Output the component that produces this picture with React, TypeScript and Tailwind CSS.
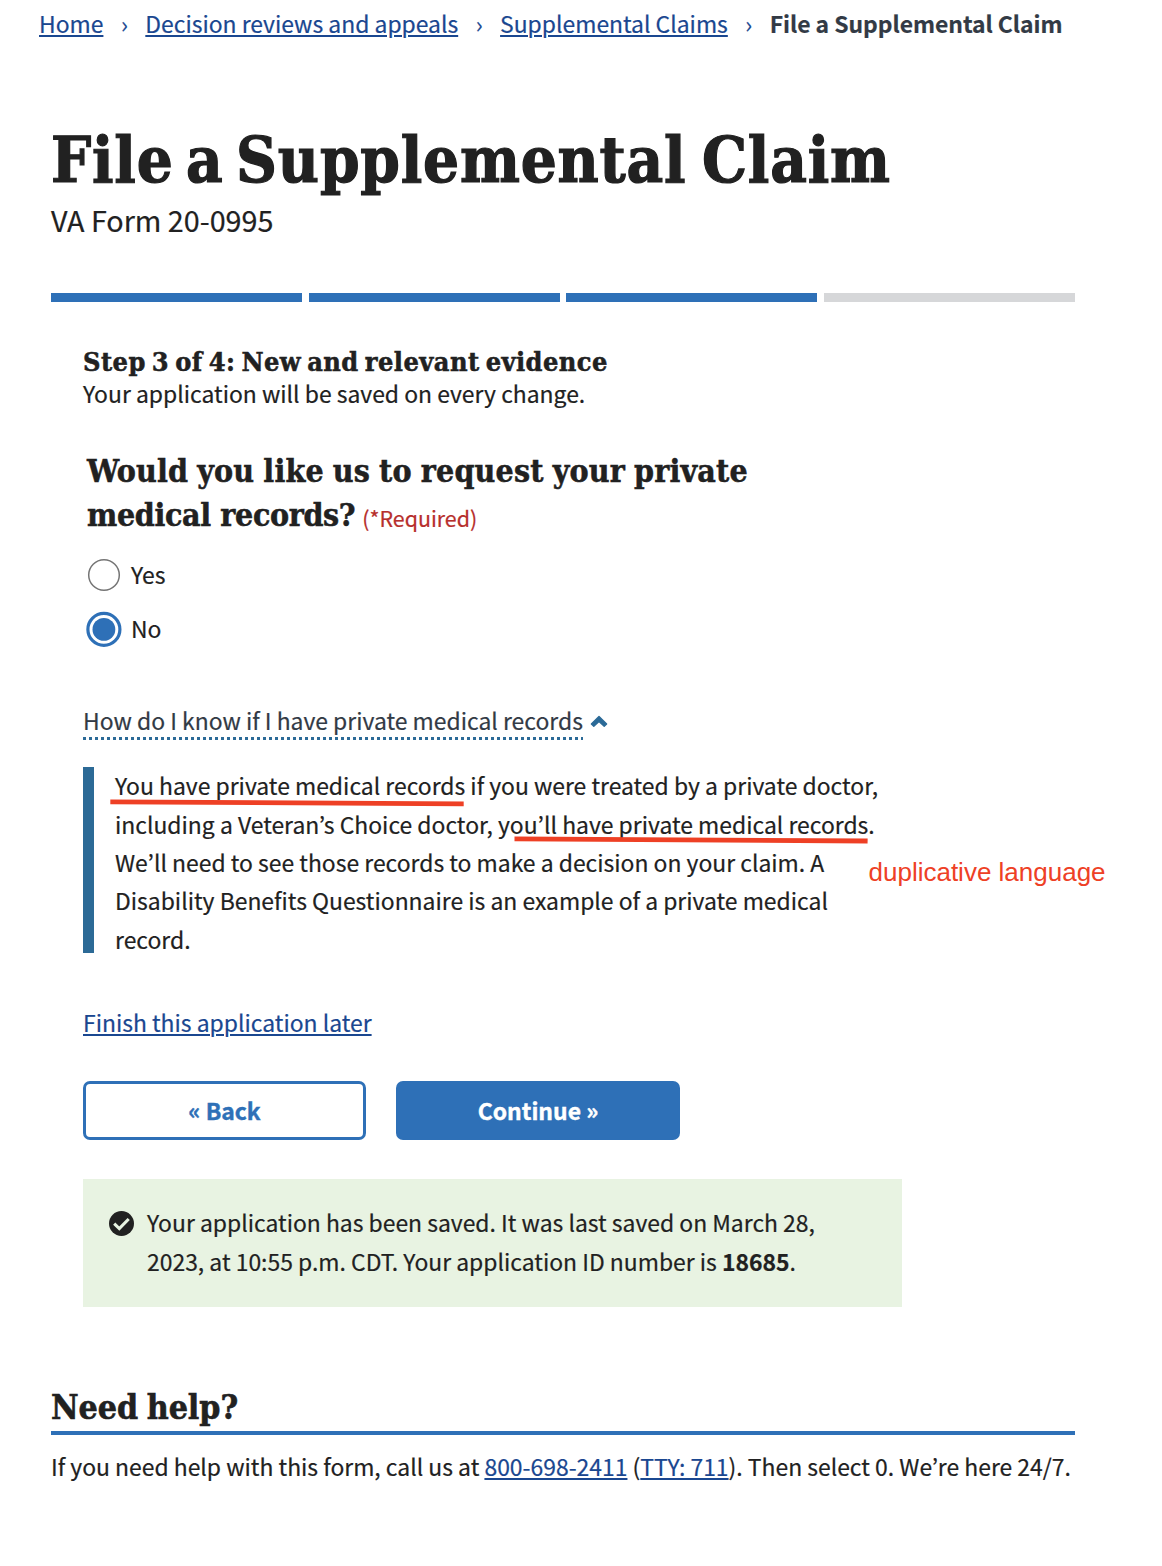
import type { ReactNode } from "react";

const LINK = "text-[#1a4790] underline decoration-2 underline-offset-[2px]";
const HEADING = "font-['DejaVu_Serif_Condensed','DejaVu_Serif',serif] font-bold";

function Link({ children }: { children: ReactNode }) {
  return (
    <a href="#" className={LINK}>
      {children}
    </a>
  );
}

function Breadcrumbs() {
  const trail = ["Home", "Decision reviews and appeals", "Supplemental Claims"];
  return (
    <nav className="flex h-[46px] items-center whitespace-nowrap pl-[39px] pt-px text-[22.9px]">
      {trail.map((label) => (
        <span key={label} className="flex items-center">
          <Link>{label}</Link>
          <span className="w-[41.9px] text-center text-[#1a4790]">›</span>
        </span>
      ))}
      <span className="font-bold tracking-[-0.03px] text-[#323a45]">File a Supplemental Claim</span>
    </nav>
  );
}

function ProgressBar() {
  return (
    <div className="mt-[54px] grid h-[9px] w-[1024px] grid-cols-4 gap-[6.6px]">
      <div className="bg-[#2e70b7]" />
      <div className="bg-[#2e70b7]" />
      <div className="bg-[#2e70b7]" />
      <div className="bg-[#d6d7d9]" />
    </div>
  );
}

function Radio({ label, checked }: { label: string; checked?: boolean }) {
  return (
    <label className="flex h-[36px] items-center">
      <svg width="36" height="36" viewBox="0 0 36 36" fill="none">
        {checked ? (
          <>
            <circle cx="17.9" cy="18.4" r="16" stroke="#2e70b7" strokeWidth="3.2" />
            <circle cx="17.9" cy="18.4" r="11.4" fill="#2e70b7" />
          </>
        ) : (
          <circle cx="18" cy="18" r="15.3" stroke="#757575" strokeWidth="1.5" />
        )}
      </svg>
      <span className="ml-[9px] pb-[3px] leading-[34px]">{label}</span>
    </label>
  );
}

export default function App() {
  return (
    <div className="h-[1566px] w-[1162px] overflow-hidden bg-white font-['Noto_Sans_CJK_KR',sans-serif] text-[22.92px] leading-[38.5px] text-[#212121] [-webkit-text-stroke:0.2px]">
      <Breadcrumbs />

      <main className="pl-[51px]">
        <h1
          className={`${HEADING} mt-[75px] h-[79px] whitespace-nowrap text-[63px] leading-[78px] tracking-[0.8px] [word-spacing:-8px] [-webkit-text-stroke:1.2px]`}
        >
          File a Supplemental <span className="ml-[3px]">Claim</span>
        </h1>
        <p className="h-[39px] text-[28.7px] leading-[39px]">VA Form 20-0995</p>

        <ProgressBar />

        <section className="pl-8 pt-[45px]">
          <h2
            className={`${HEADING} h-[31px] text-[26.9px] leading-[30px] tracking-[0.45px] [word-spacing:-2.8px] [-webkit-text-stroke:0.5px]`}
          >
            Step 3 of 4: New and relevant evidence
          </h2>
          <p className="h-[30px] leading-[30px]">Your application will be saved on every change.</p>

          <fieldset className="pl-[3px] pt-[41px]">
            <legend className="contents">
              <span
                className={`${HEADING} block h-[89px] whitespace-nowrap pl-px text-[31.8px] leading-[44.3px] [-webkit-text-stroke:0.5px]`}
              >
                <span className="tracking-[0.2px] [word-spacing:-1.2px]">Would you like us to request your private</span>
                <br />
                <span className="tracking-[-0.35px]">medical records?</span>
                <span className="relative top-px ml-[7px] font-['Noto_Sans_CJK_KR',sans-serif] text-[21.4px] font-normal leading-none text-[#b72f2c] [-webkit-text-stroke:0.2px]">
                  (*Required)
                </span>
              </span>
            </legend>
            <div className="mt-[19px] flex flex-col gap-[18px]">
              <Radio label="Yes" />
              <Radio label="No" checked />
            </div>
          </fieldset>

          <div className="mt-[54px] flex h-[39px] items-start gap-2">
            <span className="flex h-[39px] flex-col justify-between text-[#323a45]">
              <span className="h-9 leading-[38px]">How do I know if I have private medical records</span>
              <span className="h-[3px] bg-[repeating-linear-gradient(90deg,#2b6a97_0px,#2b6a97_3px,transparent_3px,transparent_6px)]" />
            </span>
            <svg className="-ml-px mt-[13px]" width="18" height="14" viewBox="0 0 18 14" fill="none">
              <path
                d="M1.4 9.9 9 2.4 16.6 9.9 14.2 12.3 9 7.6 3.8 12.3Z"
                fill="#2b6a97"
                stroke="#2b6a97"
                strokeWidth="1.4"
                strokeLinejoin="round"
              />
            </svg>
          </div>

          <div className="relative mt-[26px] flex h-[194px]">
            <div className="mt-px h-[186px] w-[11px] bg-[#2c6a96]" />
            <p className="ml-[21px] whitespace-nowrap leading-[38.4px]">
              You have private medical records if you were treated by a private doctor,
              <br />
              <span className="relative top-px">
                including a Veteran’s Choice doctor, you’ll have private medical records.
              </span>
              <br />
              We’ll need to see those records to make a decision on your claim. A
              <br />
              Disability Benefits Questionnaire is an example of a private medical
              <br />
              record.
            </p>
            <svg className="absolute left-[27px] top-[32px]" width="354" height="10" viewBox="0 0 354 10">
              <path d="M0.3 3.8 353.7 5.8" stroke="#ee4025" strokeWidth="4.8" />
            </svg>
            <svg className="absolute left-[431px] top-[69px]" width="354" height="11" viewBox="0 0 354 11">
              <path d="M0.5 3.8 353.6 6" stroke="#ee4025" strokeWidth="4.8" />
            </svg>
            <span className="absolute left-[785.5px] top-[91px] whitespace-nowrap font-['Liberation_Sans',sans-serif] text-[26px] leading-[30px] text-[#ee4025] [-webkit-text-stroke:0px]">
              duplicative language
            </span>
          </div>

          <div className="mt-[43px] h-[39px]">
            <Link>Finish this application later</Link>
          </div>

          <div className="mt-[39px] flex h-[59px] gap-[30px] font-bold [-webkit-text-stroke:0.4px]">
            <button className="w-[283px] rounded-[7px] border-[3px] border-[#2e70b7] leading-[53px] text-[#2e70b7]">
              « Back
            </button>
            <button className="w-[284px] rounded-[7px] bg-[#2e70b7] leading-[59px] text-white">Continue »</button>
          </div>

          <div className="mt-[39px] flex h-[128px] w-[819px] bg-[#e8f3e2] pl-[26px] pt-[24px]">
            <svg className="mt-[8px]" width="25" height="25" viewBox="0 0 25 25">
              <circle cx="12.5" cy="12.5" r="12.5" fill="#212121" />
              <path d="M5.2 12.7 10.3 17.6 19.7 8" fill="none" stroke="#e8f3e2" strokeWidth="3.1" />
            </svg>
            <p className="ml-[13px] whitespace-nowrap leading-[39px]">
              Your application has been saved. It was last saved on March 28,
              <br />
              2023, at 10:55 p.m. CDT. Your application ID number is <strong className="font-bold">18685</strong>.
            </p>
          </div>
        </section>

        <section className="w-[1024px] pt-[79px]">
          <h2
            className={`${HEADING} h-[49px] border-b-4 border-[#2e70b7] text-[33.6px] leading-[42px] [word-spacing:-2px] [-webkit-text-stroke:0.6px]`}
          >
            Need help?
          </h2>
          <p className="mt-[12px] whitespace-nowrap leading-[38px]">
            If you need help with this form, call us at <Link>800-698-2411</Link> (<Link>TTY: 711</Link>). Then select
            0. We’re here 24/7.
          </p>
        </section>
      </main>
    </div>
  );
}
